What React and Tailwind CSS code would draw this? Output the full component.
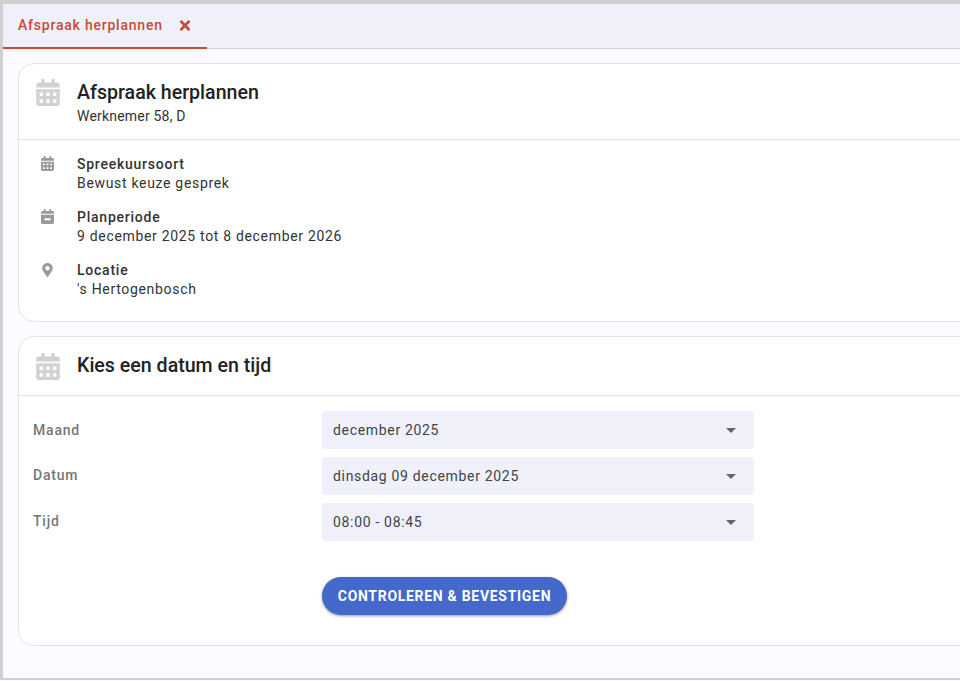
import { FaCalendarAlt, FaCalendarMinus, FaMapMarkerAlt, FaTimes } from "react-icons/fa";

function Info({ icon, label, value }) {
    return (
        <div className="flex h-[53px]">
            <div className="flex h-[17px] w-[58px] items-center justify-center pr-[1px] text-[#9a9a9a]">{icon}</div>
            <div className="text-[14px] leading-[19px] tracking-[0.68px] text-[#333]">
                <div className="font-medium tracking-[0.76px]">{label}</div>
                <div>{value}</div>
            </div>
        </div>
    );
}

function Select({ value }) {
    return (
        <div className="flex h-[38px] w-[432px] items-center justify-between rounded-[4px] bg-[#eff0fa] pl-[11px] pr-[18px] text-[14px] tracking-[0.68px] text-[#444]">
            <span>{value}</span>
            <span className="h-0 w-0 border-x-[5px] border-t-[5px] border-x-transparent border-t-[#666]" />
        </div>
    );
}

export default function App() {
    return (
        <div className="h-[681px] w-[960px] overflow-hidden bg-[#fdfbff] font-['Roboto',sans-serif]">
            <div className="h-[680px] border-t-[4px] border-b-2 border-l-[3px] border-[#d0d0d0]">
                <div className="flex h-[45px] border-b border-[#d3d3de] bg-[#eff0fa]">
                    <div className="flex h-[45px] w-[204px] items-start border-b-2 border-[#cb4a32] pt-[12px] pl-[15px] text-[14px] leading-[19px] font-medium tracking-[0.78px] text-[#cb4a32]">
                        <span>Afspraak herplannen</span>
                        <FaTimes className="mt-[2px] ml-[16px] h-[15px] w-[12px]" />
                    </div>
                </div>
                <div className="w-[1000px] pt-[14px] pl-[15px]">
                    <div className="h-[259px] rounded-[16px] border border-[#e2e2ee] bg-white">
                        <div className="flex h-[76px] border-b border-[#e2e2ee]">
                            <div className="flex w-[58px] justify-center pt-[15px] text-[#d2d2d2]">
                                <FaCalendarAlt className="h-[27px] w-[24px]" />
                            </div>
                            <div className="pt-[15px]">
                                <div className="text-[19.6px] leading-[27px] font-medium text-[#222]">Afspraak herplannen</div>
                                <div className="text-[14px] leading-[20px] tracking-[0.2px] text-[#333]">Werknemer 58, D</div>
                            </div>
                        </div>
                        <div className="pt-[15px]">
                            <Info icon={<FaCalendarAlt className="h-[15px] w-[13px]" />} label="Spreekuursoort" value="Bewust keuze gesprek" />
                            <Info icon={<FaCalendarMinus className="h-[15px] w-[13px]" />} label="Planperiode" value="9 december 2025 tot 8 december 2026" />
                            <Info icon={<FaMapMarkerAlt className="h-[14px] w-[11px]" />} label="Locatie" value="'s Hertogenbosch" />
                        </div>
                    </div>
                    <div className="mt-[14px] h-[310px] rounded-[16px] border border-[#e2e2ee] bg-white">
                        <div className="flex h-[59px] border-b border-[#e2e2ee]">
                            <div className="flex w-[58px] justify-center pt-[16px] text-[#d2d2d2]">
                                <FaCalendarAlt className="h-[27px] w-[24px]" />
                            </div>
                            <div className="pt-[15px] text-[19.6px] leading-[27px] font-medium text-[#222]">Kies een datum en tijd</div>
                        </div>
                        <div className="flex pt-[15px]">
                            <div className="w-[303px] pl-[14px] text-[14px] font-medium tracking-[0.8px] text-[#777]">
                                <div className="h-[46px] pt-[9px] leading-[20px]">Maand</div>
                                <div className="h-[46px] pt-[8px] leading-[20px]">Datum</div>
                                <div className="h-[46px] pt-[8px] leading-[20px]">Tijd</div>
                            </div>
                            <div className="flex flex-col gap-[8px]">
                                <Select value="december 2025" />
                                <Select value="dinsdag 09 december 2025" />
                                <Select value="08:00 - 08:45" />
                                <button className="mt-[28px] h-[38px] w-[245px] rounded-full bg-[#4469cb] text-[14px] font-bold tracking-[0.7px] text-white shadow-[0_1px_3px_rgba(0,0,0,0.4)]">
                                    CONTROLEREN &amp; BEVESTIGEN
                                </button>
                            </div>
                        </div>
                    </div>
                </div>
            </div>
        </div>
    );
}
